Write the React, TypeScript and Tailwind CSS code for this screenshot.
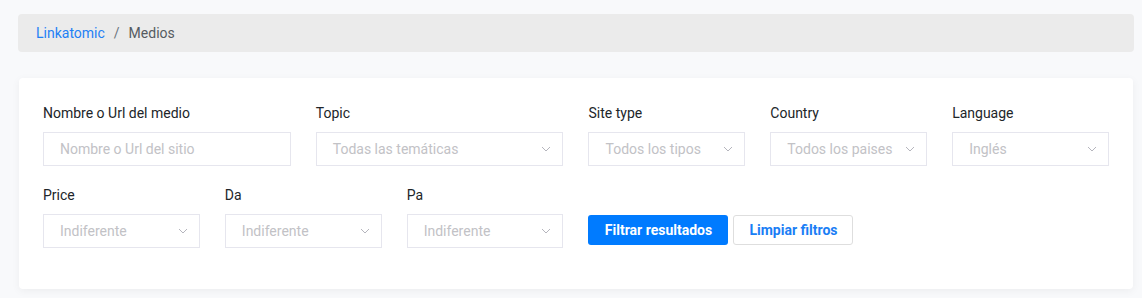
import React from "react";

const font = { fontFamily: "Roboto, 'Liberation Sans', sans-serif" };

function Chevron() {
  return (
    <svg width="10" height="6" viewBox="0 0 10 6" fill="none" className="absolute right-[11px] top-1/2 -translate-y-1/2">
      <path d="M1 1l4 4 4-4" stroke="#b5b5bd" strokeWidth="1" />
    </svg>
  );
}

function Field({ label, span, value, select = true }: { label: string; span: string; value: string; select?: boolean }) {
  return (
    <div className={`${span} mb-[19px]`}>
      <label className="block text-[14px] leading-5 text-[#212529] mb-[9px]">{label}</label>
      <div className="relative h-[34px] border border-[#e6e6ee] bg-white">
        <span className="absolute left-4 top-1/2 -translate-y-1/2 text-[14px] text-[#c2c2c6] whitespace-nowrap">{value}</span>
        {select && <Chevron />}
      </div>
    </div>
  );
}

export default function App() {
  return (
    <div className="min-h-[298px] bg-[#f8f9fb] pt-[14px] pl-[18px] pr-[8px]" style={font}>
      <div className="h-[38px] rounded bg-[#ebebeb] flex items-center pl-[18px] text-[14px]">
        <a href="#" className="text-[#1e80f5]">Linkatomic</a>
        <span className="text-[#6c757d] px-[9px]">/</span>
        <span className="text-[#555b61]">Medios</span>
      </div>

      <div className="mt-[26px] ml-px mr-px bg-white rounded shadow-[0_2px_8px_rgba(0,0,0,0.05)] pt-[25px] px-6 pb-[22px]">
        <div className="grid grid-cols-12 gap-x-[25px]">
          <Field span="col-span-3" label="Nombre o Url del medio" value="Nombre o Url del sitio" select={false} />
          <Field span="col-span-3" label="Topic" value="Todas las temáticas" />
          <Field span="col-span-2" label="Site type" value="Todos los tipos" />
          <Field span="col-span-2" label="Country" value="Todos los paises" />
          <Field span="col-span-2" label="Language" value="Inglés" />
          <Field span="col-span-2" label="Price" value="Indiferente" />
          <Field span="col-span-2" label="Da" value="Indiferente" />
          <Field span="col-span-2" label="Pa" value="Indiferente" />
          <div className="col-span-6 mb-[19px] flex items-end gap-[5px] pb-[3px]">
            <button className="h-[30px] w-[140px] rounded-[3px] bg-[#007bff] text-white text-[14px] font-bold">
              Filtrar resultados
            </button>
            <button className="h-[30px] w-[120px] rounded-[3px] border border-[#dedede] bg-white text-[#1a7ef5] text-[14px] font-bold">
              Limpiar filtros
            </button>
          </div>
        </div>
      </div>
    </div>
  );
}
